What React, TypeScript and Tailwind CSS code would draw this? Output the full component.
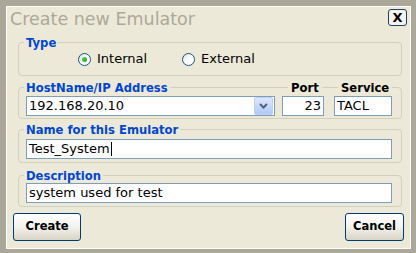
import React from "react";

const labelCls =
  "absolute top-[-7px] bg-[#ece9d8] px-[2px] text-[11.6px] font-bold leading-[14px] text-[#0046d5] whitespace-nowrap";

const inputCls =
  "h-[20px] border border-[#7f9db9] bg-white pl-[2px] text-[13px] leading-[18px] text-black";

function Group({
  label,
  className,
  children,
}: {
  label: string;
  className?: string;
  children: React.ReactNode;
}) {
  return (
    <div
      className={`relative ml-[11px] w-[384px] rounded-[4px] border border-[#d0d0bf] ${className ?? ""}`}
    >
      <span className={`${labelCls} left-[5px]`}>{label}</span>
      {children}
    </div>
  );
}

function Radio({ checked, label, className }: { checked?: boolean; label: string; className?: string }) {
  return (
    <div className={`flex items-center gap-[6px] ${className ?? ""}`}>
      <span className="flex h-[13px] w-[13px] items-center justify-center rounded-full border border-[#1c5180] bg-gradient-to-br from-[#dcdcd7] via-white to-white">
        {checked && (
          <span className="h-[5px] w-[5px] rounded-full bg-gradient-to-br from-[#55d551] to-[#21a121]" />
        )}
      </span>
      <span className="text-[13px] leading-[16px] text-black">{label}</span>
    </div>
  );
}

function XpButton({ children, className }: { children: React.ReactNode; className?: string }) {
  return (
    <button
      className={`flex h-[28px] items-center justify-center rounded-[3px] border border-[#003c74] bg-gradient-to-b from-white via-[#f3f2ec] to-[#d8d3c6] text-[11.5px] font-bold text-black ${className ?? ""}`}
    >
      {children}
    </button>
  );
}

export default function App() {
  return (
    <div className="h-[253px] w-[416px] bg-[#aca899] pb-[4px] pl-[6px] pr-[5px] pt-[6px] font-['DejaVu_Sans',Verdana,sans-serif]">
      <div className="flex h-full flex-col border border-white bg-[#ece9d8]">
        {/* title */}
        <div className="flex items-start justify-between pl-[3px] pr-[3px]">
          <span className="mt-[2px] text-[17.5px] leading-[20px] text-[#aca899]">Create new Emulator</span>
          <span className="mt-[2px] flex h-[17px] w-[19px] items-center justify-center rounded-[3px] border border-[#1f3f68] bg-[#f4f3ee] text-[13px] font-bold leading-none text-black">
            X
          </span>
        </div>

        <Group label="Type" className="mt-[13px] h-[34px]">
          <div className="flex pl-[59px] pt-[8px]">
            <Radio checked label="Internal" className="w-[104px]" />
            <Radio label="External" />
          </div>
        </Group>

        <Group label="HostName/IP Address" className="mt-[11px] h-[32px]">
          <span className={`${labelCls} left-[269px] px-[3px] text-black`}>Port</span>
          <span className={`${labelCls} left-[319px] px-[3px] text-black`}>Service</span>
          <div className="flex pl-[7px] pt-[8px]">
            <div className={`${inputCls} flex w-[249px] items-center justify-between pr-[1px]`}>
              <span>192.168.20.10</span>
              <span className="flex h-[18px] w-[19px] items-center justify-center rounded-[2px] border border-[#bcd0f8] bg-gradient-to-b from-[#dde8fe] to-[#b3c8f5]">
                <svg width="9" height="6" viewBox="0 0 9 6">
                  <path d="M1 1 L4.5 4.5 L8 1" fill="none" stroke="#4d6185" strokeWidth="2" />
                </svg>
              </span>
            </div>
            <div className={`${inputCls} ml-[7px] w-[42px] pr-[2px] text-right`}>23</div>
            <div className={`${inputCls} ml-[10px] w-[58px]`}>TACL</div>
          </div>
        </Group>

        <Group label="Name for this Emulator" className="mt-[10px] h-[34px]">
          <div className="pl-[7px] pt-[9px]">
            <div className={`${inputCls} flex w-[366px] items-center`}>
              <span>Test_System</span>
              <span className="ml-[1px] h-[14px] w-[1px] bg-black" />
            </div>
          </div>
        </Group>

        <Group label="Description" className="mt-[12px] h-[32px]">
          <div className="pl-[7px] pt-[7px]">
            <div className={`${inputCls} w-[366px]`}>system used for test</div>
          </div>
        </Group>

        <div className="mt-[6px] flex justify-between px-[6px]">
          <XpButton className="w-[68px]">Create</XpButton>
          <XpButton className="w-[59px]">Cancel</XpButton>
        </div>
      </div>
    </div>
  );
}
